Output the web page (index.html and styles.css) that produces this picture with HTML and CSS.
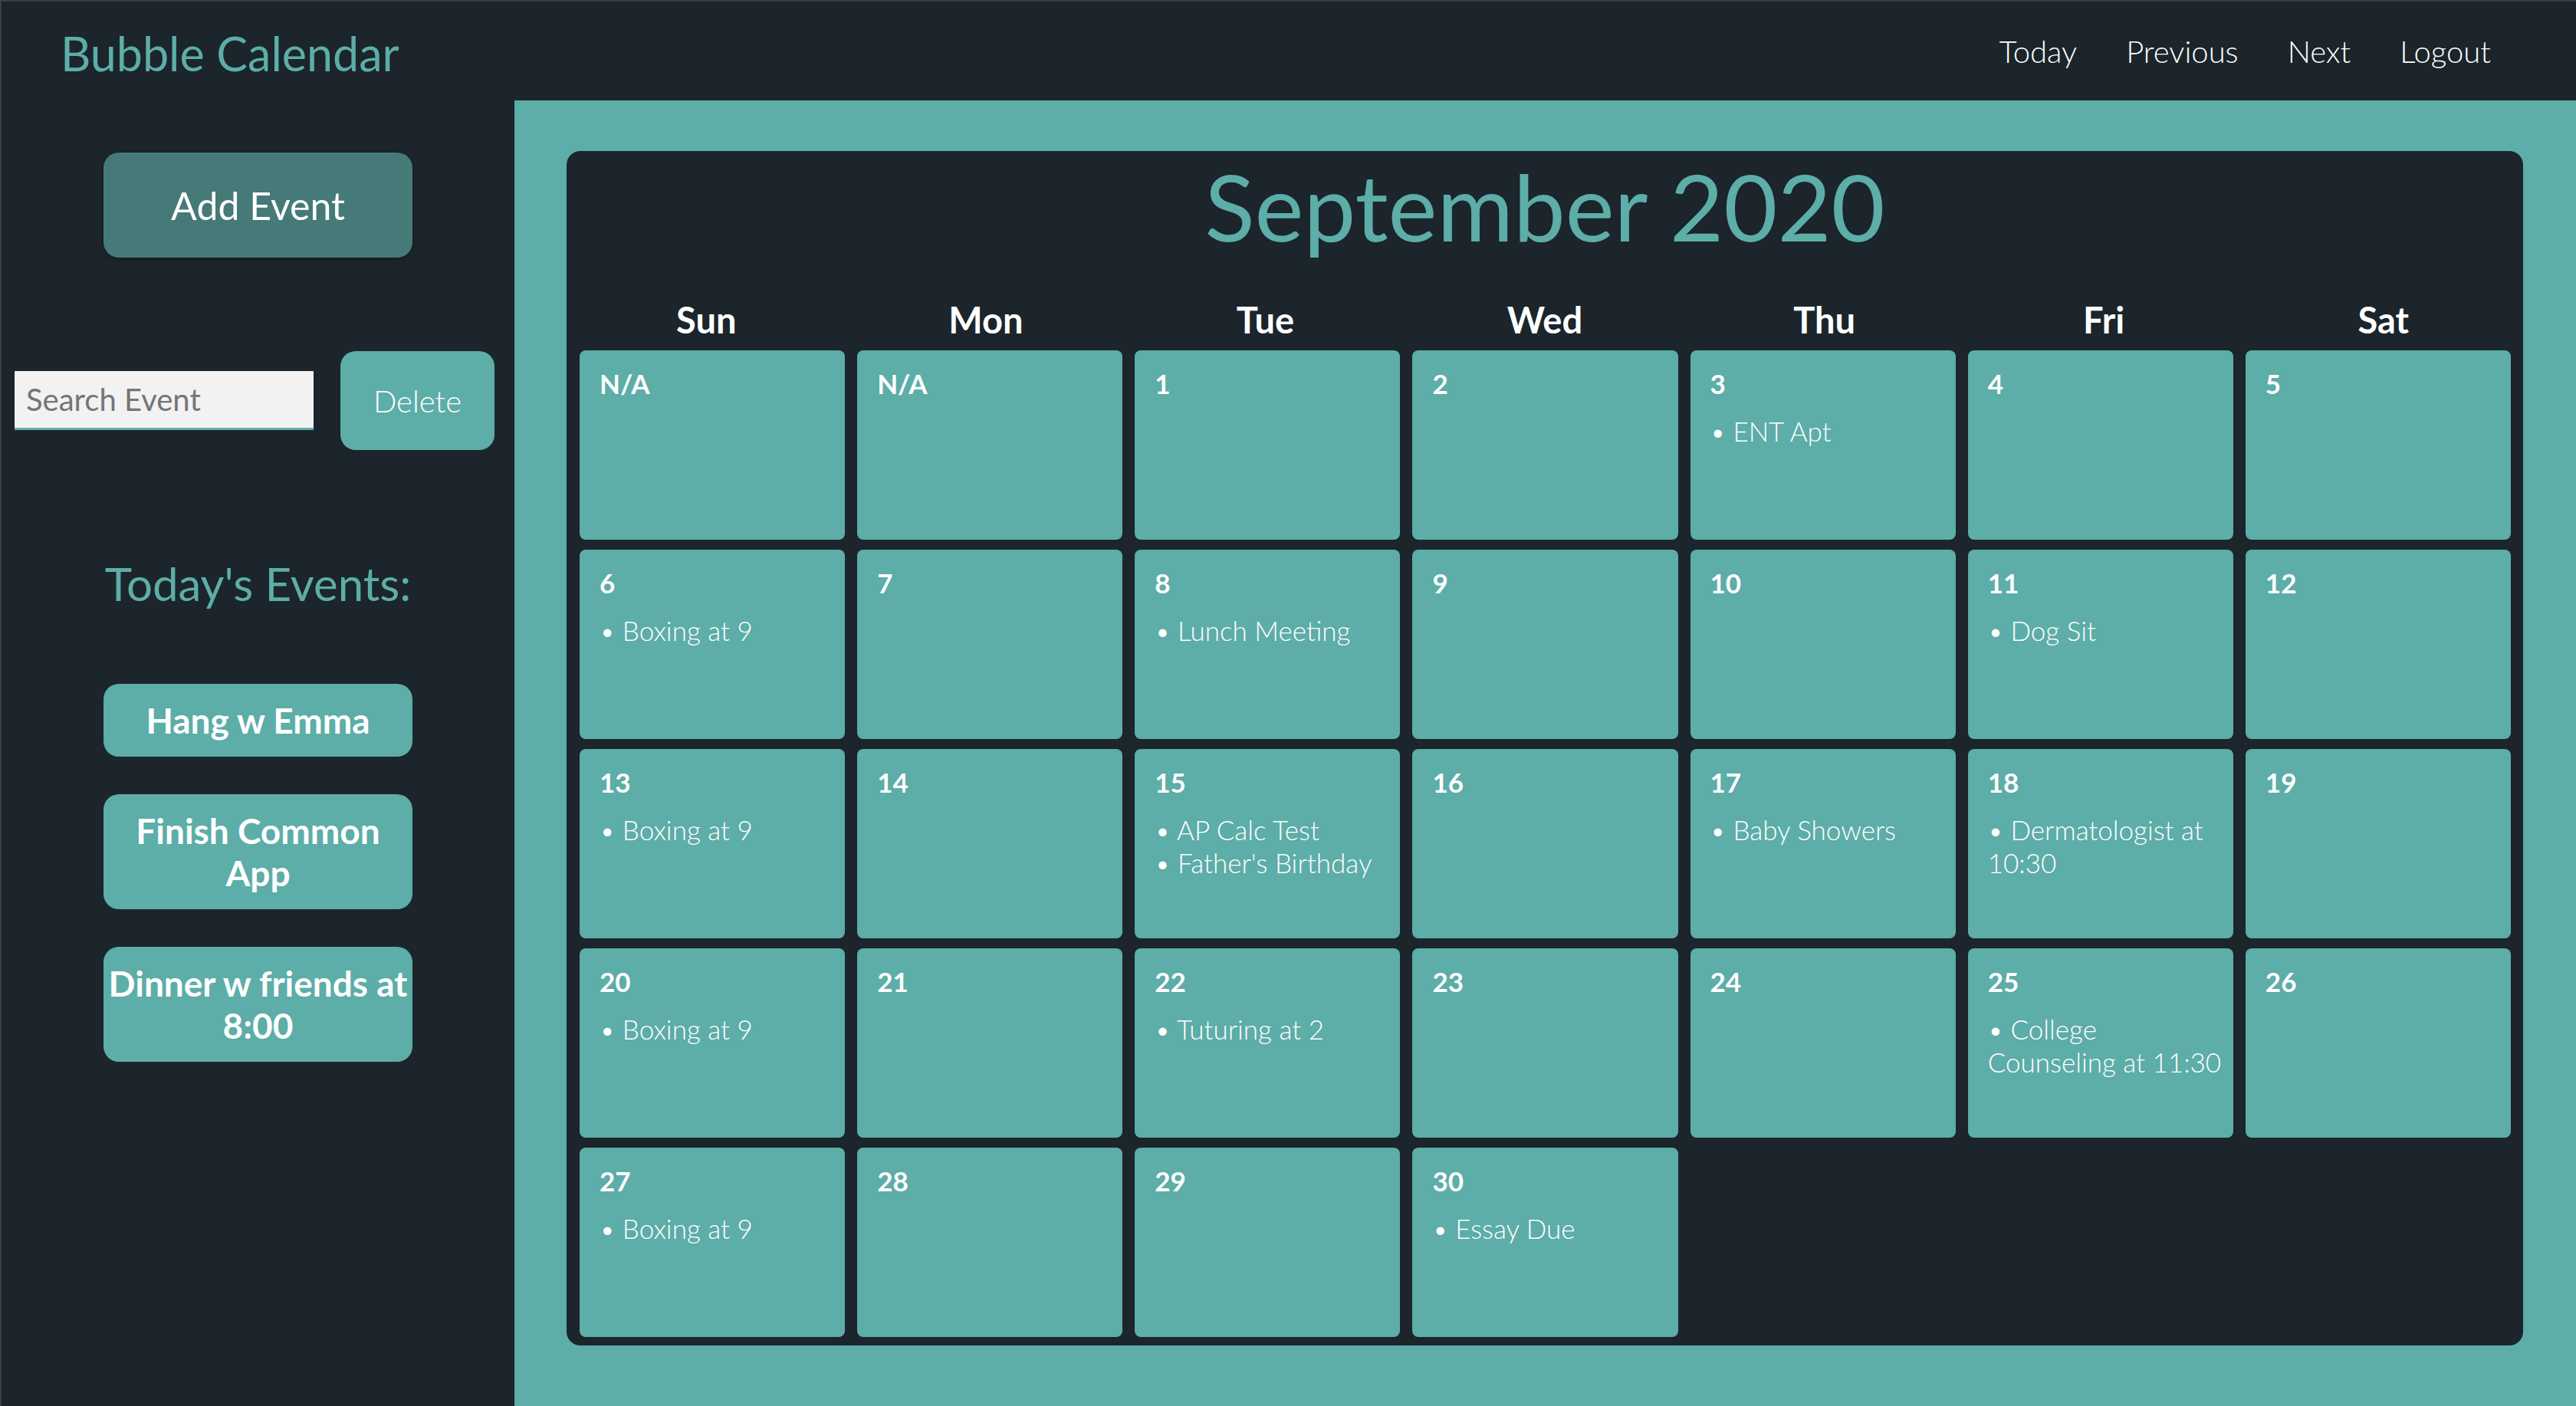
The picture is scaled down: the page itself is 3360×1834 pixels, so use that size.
FILE: index.html
```html
<!DOCTYPE html>
<html lang="en">
<head>
<meta charset="utf-8">
<title>Bubble Calendar</title>
<link rel="stylesheet" href="styles.css">
</head>
<body>
<header class="topbar">
  <div class="brand">Bubble Calendar</div>
  <nav class="nav">
    <a class="nav-link">Today</a>
    <a class="nav-link">Previous</a>
    <a class="nav-link">Next</a>
    <a class="nav-link">Logout</a>
  </nav>
</header>
<div class="layout">
  <aside class="sidebar">
    <button class="add-btn">Add Event</button>
    <div class="search-row">
      <input class="search-input" type="text" placeholder="Search Event">
      <button class="delete-btn">Delete</button>
    </div>
    <h2 class="today-title">Today's Events:</h2>
    <div class="today-list">
      <button class="today-item">Hang w Emma</button>
      <button class="today-item">Finish Common App</button>
      <button class="today-item">Dinner w friends at 8:00</button>
    </div>
  </aside>
  <main class="main">
    <section class="card">
      <h1 class="month">September 2020</h1>
      <div class="dow-row">
        <div class="dow">Sun</div><div class="dow">Mon</div><div class="dow">Tue</div><div class="dow">Wed</div><div class="dow">Thu</div><div class="dow">Fri</div><div class="dow">Sat</div>
      </div>
      <div class="grid">
        <div class="cell"><div class="date">N/A</div></div>
        <div class="cell"><div class="date">N/A</div></div>
        <div class="cell"><div class="date">1</div></div>
        <div class="cell"><div class="date">2</div></div>
        <div class="cell"><div class="date">3</div><ul class="events"><li>ENT Apt</li></ul></div>
        <div class="cell"><div class="date">4</div></div>
        <div class="cell"><div class="date">5</div></div>

        <div class="cell"><div class="date">6</div><ul class="events"><li>Boxing at 9</li></ul></div>
        <div class="cell"><div class="date">7</div></div>
        <div class="cell"><div class="date">8</div><ul class="events"><li>Lunch Meeting</li></ul></div>
        <div class="cell"><div class="date">9</div></div>
        <div class="cell"><div class="date">10</div></div>
        <div class="cell"><div class="date">11</div><ul class="events"><li>Dog Sit</li></ul></div>
        <div class="cell"><div class="date">12</div></div>

        <div class="cell"><div class="date">13</div><ul class="events"><li>Boxing at 9</li></ul></div>
        <div class="cell"><div class="date">14</div></div>
        <div class="cell"><div class="date">15</div><ul class="events"><li>AP Calc Test</li><li>Father's Birthday</li></ul></div>
        <div class="cell"><div class="date">16</div></div>
        <div class="cell"><div class="date">17</div><ul class="events"><li>Baby Showers</li></ul></div>
        <div class="cell"><div class="date">18</div><ul class="events"><li>Dermatologist at 10:30</li></ul></div>
        <div class="cell"><div class="date">19</div></div>

        <div class="cell"><div class="date">20</div><ul class="events"><li>Boxing at 9</li></ul></div>
        <div class="cell"><div class="date">21</div></div>
        <div class="cell"><div class="date">22</div><ul class="events"><li>Tuturing at 2</li></ul></div>
        <div class="cell"><div class="date">23</div></div>
        <div class="cell"><div class="date">24</div></div>
        <div class="cell"><div class="date">25</div><ul class="events"><li>College Counseling at 11:30</li></ul></div>
        <div class="cell"><div class="date">26</div></div>

        <div class="cell"><div class="date">27</div><ul class="events"><li>Boxing at 9</li></ul></div>
        <div class="cell"><div class="date">28</div></div>
        <div class="cell"><div class="date">29</div></div>
        <div class="cell"><div class="date">30</div><ul class="events"><li>Essay Due</li></ul></div>
      </div>
    </section>
  </main>
</div>
</body>
</html>
```
FILE: styles.css
```css
* { box-sizing: border-box; }

html, body {
  margin: 0;
  padding: 0;
}

body {
  height: 100vh;
  display: flex;
  flex-direction: column;
  background: #1b252b;
  font-family: Lato, "Open Sans", "Liberation Sans", sans-serif;
  color: #ffffff;
  border-top: 2px solid #3a3e42;
  border-left: 2px solid #3a3e42;
  overflow: hidden;
}

/* ---------- top bar ---------- */
.topbar {
  height: 129px;
  flex: none;
  display: flex;
  justify-content: space-between;
  align-items: flex-start;
  padding: 0 111px 0 77px;
}

.brand {
  margin-top: 31px;
  font-size: 61px;
  line-height: 73px;
  font-weight: 400;
  color: #5dada8;
}

.nav {
  display: flex;
  gap: 64px;
  margin-top: 41px;
}

.nav-link {
  font-size: 40px;
  line-height: 48px;
  font-weight: 300;
  color: #ffffff;
  cursor: pointer;
}

/* ---------- layout ---------- */
.layout {
  flex: 1;
  display: flex;
  min-height: 0;
}

.sidebar {
  width: 669px;
  flex: none;
  display: flex;
  flex-direction: column;
  align-items: center;
  padding-top: 68px;
}

.add-btn {
  width: 403px;
  height: 137px;
  border: none;
  border-radius: 20px;
  background: #457a78;
  color: #ffffff;
  font-family: inherit;
  font-size: 50px;
  font-weight: 400;
  box-shadow: 0 2px 4px rgba(0, 0, 0, 0.25);
}

.search-row {
  align-self: stretch;
  display: flex;
  align-items: center;
  gap: 35px;
  padding-left: 17px;
  margin-top: 122px;
}

.search-input {
  width: 390px;
  height: 77px;
  border: none;
  border-bottom: 3px solid #5dada8;
  background: #f2f2f2;
  padding: 0 0 0 15px;
  font-family: inherit;
  font-size: 40px;
  color: #333;
  outline: none;
}

.search-input::placeholder {
  color: #757575;
}

.delete-btn {
  width: 201px;
  height: 129px;
  border: none;
  border-radius: 20px;
  background: #5dada8;
  color: #ffffff;
  font-family: inherit;
  font-size: 40px;
  font-weight: 300;
}

.today-title {
  margin: 138px 0 0;
  font-size: 60px;
  line-height: 72px;
  font-weight: 400;
  color: #5dada8;
}

.today-list {
  display: flex;
  flex-direction: column;
  gap: 49px;
  margin-top: 95px;
}

.today-item {
  width: 403px;
  padding: 20px 1px;
  border: none;
  border-radius: 20px;
  background: #5dada8;
  color: #ffffff;
  font-family: inherit;
  font-size: 46px;
  line-height: 55px;
  font-weight: 700;
}

/* ---------- main / calendar ---------- */
.main {
  flex: 1;
  background: #5dada8;
  padding: 66px 69px 0 68px;
}

.card {
  background: #1b252b;
  border-radius: 18px;
  padding: 8px 0 11px;
}

.month {
  margin: 0 0 59px;
  text-align: center;
  font-size: 121px;
  line-height: 127px;
  font-weight: 400;
  color: #5dada8;
}

.dow-row {
  display: grid;
  grid-template-columns: repeat(7, 1fr);
  margin-bottom: 13px;
}

.dow {
  text-align: center;
  font-size: 47px;
  line-height: 53px;
  font-weight: 700;
  color: #ffffff;
}

.grid {
  display: grid;
  grid-template-columns: repeat(7, 1fr);
  column-gap: 16px;
  row-gap: 13px;
  padding: 0 16px 0 17px;
}

.cell {
  height: 247px;
  background: #5dada8;
  border-radius: 8px;
  padding: 22px 8px 0 26px;
}

.date {
  font-size: 35px;
  line-height: 42px;
  font-weight: 700;
}

.events {
  list-style: none;
  margin: 20px 0 0;
  padding: 0;
}

.events li {
  font-size: 35px;
  line-height: 43px;
  font-weight: 300;
}

.events li::before {
  content: "\2022\00a0";
}
```
